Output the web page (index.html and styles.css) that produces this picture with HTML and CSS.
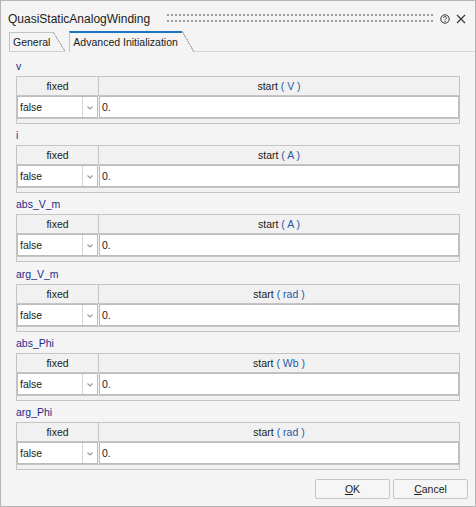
FILE: index.html
```html
<!DOCTYPE html>
<html lang="en">
<head>
  <meta charset="UTF-8">
  <title>QuasiStaticAnalogWinding</title>
  <link rel="stylesheet" href="styles.css">
</head>
<body>

<div class="dialog">
  <div class="titlebar">
    <span class="title">QuasiStaticAnalogWinding</span>
    <span class="grip"></span>
    <svg class="tb-icon" width="10" height="10" viewBox="0 0 10 10">
      <circle cx="5" cy="5" r="4.2" fill="none" stroke="#333" stroke-width="1"/>
      <path d="M3.6 4 A1.45 1.45 0 1 1 5.6 5.3 Q5 5.6 5 6.3" fill="none" stroke="#333" stroke-width="0.9"/>
      <rect x="4.5" y="7" width="1" height="1" fill="#333"/>
    </svg>
    <svg class="tb-icon close" width="10" height="10" viewBox="0 0 10 10">
      <path d="M1 1 L9 9 M9 1 L1 9" stroke="#333" stroke-width="1.1"/>
    </svg>
  </div>

  <div class="tabs">
    <div class="tab"><span>General</span></div>
    <div class="tab active"><span>Advanced Initialization</span></div>
    <div class="tab-fill"></div>
  </div>

  <div class="pane">
    <div class="group">
      <div class="group-name">v</div>
      <div class="grid">
        <div class="grid-head"><div class="col-fixed">fixed</div><div class="col-start">start <span class="unit">( V )</span></div></div>
        <div class="grid-row">
          <div class="combo"><span class="combo-value">false</span><span class="combo-arrow"><svg width="6" height="4" viewBox="0 0 6 4"><path d="M0.5 0.5 L3 3 L5.5 0.5" fill="none" stroke="#9a9a9a" stroke-width="1.2"/></svg></span></div>
          <div class="cell-input">0.</div>
        </div>
      </div>
    </div>

    <div class="group">
      <div class="group-name">i</div>
      <div class="grid">
        <div class="grid-head"><div class="col-fixed">fixed</div><div class="col-start">start <span class="unit">( A )</span></div></div>
        <div class="grid-row">
          <div class="combo"><span class="combo-value">false</span><span class="combo-arrow"><svg width="6" height="4" viewBox="0 0 6 4"><path d="M0.5 0.5 L3 3 L5.5 0.5" fill="none" stroke="#9a9a9a" stroke-width="1.2"/></svg></span></div>
          <div class="cell-input">0.</div>
        </div>
      </div>
    </div>

    <div class="group">
      <div class="group-name">abs_V_m</div>
      <div class="grid">
        <div class="grid-head"><div class="col-fixed">fixed</div><div class="col-start">start <span class="unit">( A )</span></div></div>
        <div class="grid-row">
          <div class="combo"><span class="combo-value">false</span><span class="combo-arrow"><svg width="6" height="4" viewBox="0 0 6 4"><path d="M0.5 0.5 L3 3 L5.5 0.5" fill="none" stroke="#9a9a9a" stroke-width="1.2"/></svg></span></div>
          <div class="cell-input">0.</div>
        </div>
      </div>
    </div>

    <div class="group">
      <div class="group-name">arg_V_m</div>
      <div class="grid">
        <div class="grid-head"><div class="col-fixed">fixed</div><div class="col-start">start <span class="unit">( rad )</span></div></div>
        <div class="grid-row">
          <div class="combo"><span class="combo-value">false</span><span class="combo-arrow"><svg width="6" height="4" viewBox="0 0 6 4"><path d="M0.5 0.5 L3 3 L5.5 0.5" fill="none" stroke="#9a9a9a" stroke-width="1.2"/></svg></span></div>
          <div class="cell-input">0.</div>
        </div>
      </div>
    </div>

    <div class="group">
      <div class="group-name">abs_Phi</div>
      <div class="grid">
        <div class="grid-head"><div class="col-fixed">fixed</div><div class="col-start">start <span class="unit">( Wb )</span></div></div>
        <div class="grid-row">
          <div class="combo"><span class="combo-value">false</span><span class="combo-arrow"><svg width="6" height="4" viewBox="0 0 6 4"><path d="M0.5 0.5 L3 3 L5.5 0.5" fill="none" stroke="#9a9a9a" stroke-width="1.2"/></svg></span></div>
          <div class="cell-input">0.</div>
        </div>
      </div>
    </div>

    <div class="group">
      <div class="group-name">arg_Phi</div>
      <div class="grid">
        <div class="grid-head"><div class="col-fixed">fixed</div><div class="col-start">start <span class="unit">( rad )</span></div></div>
        <div class="grid-row">
          <div class="combo"><span class="combo-value">false</span><span class="combo-arrow"><svg width="6" height="4" viewBox="0 0 6 4"><path d="M0.5 0.5 L3 3 L5.5 0.5" fill="none" stroke="#9a9a9a" stroke-width="1.2"/></svg></span></div>
          <div class="cell-input">0.</div>
        </div>
      </div>
    </div>
  </div>

  <div class="footer">
    <button class="btn"><u>O</u>K</button>
    <button class="btn"><u>C</u>ancel</button>
  </div>
</div>

</body>
</html>
```

FILE: styles.css
```css
body {
  margin: 0;
  background: #fff;
  font-family: "Liberation Sans", Arial, sans-serif;
  font-size: 10.5px;
  color: #1a1a1a;
}
.dialog {
  width: 476px;
  height: 507px;
  box-sizing: border-box;
  border: 1px solid #b5b5b5;
  background: #f4f4f4;
  display: flex;
  flex-direction: column;
}

/* title bar */
.titlebar {
  display: flex;
  align-items: flex-start;
  height: 30px;
  flex: none;
  padding: 0 9px 0 7px;
}
.title {
  font-size: 12px;
  line-height: 16px;
  margin-top: 10px;
  color: #1b1b1b;
}
.grip {
  flex: 1;
  height: 8px;
  margin: 13px 7px 0 17px;
  background:
    linear-gradient(90deg, #9c9c9c 2px, transparent 2px) 0 0 / 4px 2px repeat-x,
    linear-gradient(90deg, #9c9c9c 2px, transparent 2px) 0 6px / 4px 2px repeat-x;
}
.tb-icon {
  margin-top: 13px;
  flex: none;
}
.tb-icon.close {
  margin-left: 6px;
}

/* tabs */
.tabs {
  display: flex;
  align-items: flex-end;
  height: 21px;
  flex: none;
  padding-left: 8px;
}
.tab {
  display: flex;
  height: 20px;
  box-sizing: border-box;
  border-bottom: 1px solid #cfcfcf;
}
.tab span {
  border-top: 1px solid #c4c4c4;
  border-left: 1px solid #c4c4c4;
  padding: 0 3px;
  line-height: 18px;
  color: #1a1a1a;
}
.tab::after {
  content: "";
  width: 12px;
  background: linear-gradient(to top right, transparent calc(50% - 0.6px), #bdbdbd calc(50% - 0.6px), #bdbdbd calc(50% + 0.6px), transparent calc(50% + 0.6px));
}
.tab.active {
  height: 21px;
  margin-left: 4px;
  border-bottom: none;
}
.tab.active span {
  border-top: 2px solid #1a74bf;
  padding-right: 4px;
  line-height: 19px;
}
.tab-fill {
  flex: 1;
  border-bottom: 1px solid #d6d6d6;
}

/* variable groups */
.pane {
  flex: 1;
  padding: 4px 15px 0;
}
.group + .group {
  margin-top: 1.2px;
}
.group-name {
  line-height: 20px;
  height: 20px;
  color: #1f2a8a;
}
.grid {
  border: 1px solid #c4c4c4;
  background: #f1f1f1;
  padding-bottom: 4px;
}
.grid-head {
  display: flex;
  height: 18px;
  line-height: 18px;
  border-bottom: 1px solid #c4c4c4;
  text-align: center;
}
.col-fixed {
  width: 81px;
  border-right: 1px solid #c4c4c4;
}
.col-start {
  flex: 1;
}
.unit {
  color: #2458a6;
}
.grid-row {
  display: flex;
  gap: 1px;
  height: 22px;
  border-bottom: 1px solid #c4c4c4;
}
.combo {
  width: 81px;
  box-sizing: border-box;
  display: flex;
  border: 1px solid #bcbcbc;
  background: #fff;
}
.combo-value {
  width: 62px;
  padding-left: 2px;
  line-height: 20px;
  border-right: 1px solid #d6d6d6;
}
.combo-arrow {
  flex: 1;
  display: flex;
  align-items: center;
  justify-content: center;
  padding-top: 2px;
}
.cell-input {
  flex: 1;
  border: 1px solid #bcbcbc;
  background: #fff;
  padding-left: 2px;
  line-height: 20px;
}

/* buttons */
.footer {
  flex: none;
  display: flex;
  justify-content: flex-end;
  gap: 3px;
  padding: 9px 7px 7px;
}
.btn {
  width: 75px;
  height: 20px;
  padding: 0;
  font-family: inherit;
  font-size: 10.5px;
  color: #1a1a1a;
  background: #f6f6f6;
  border: 1px solid #c6c6c6;
  border-radius: 2px;
}
```
